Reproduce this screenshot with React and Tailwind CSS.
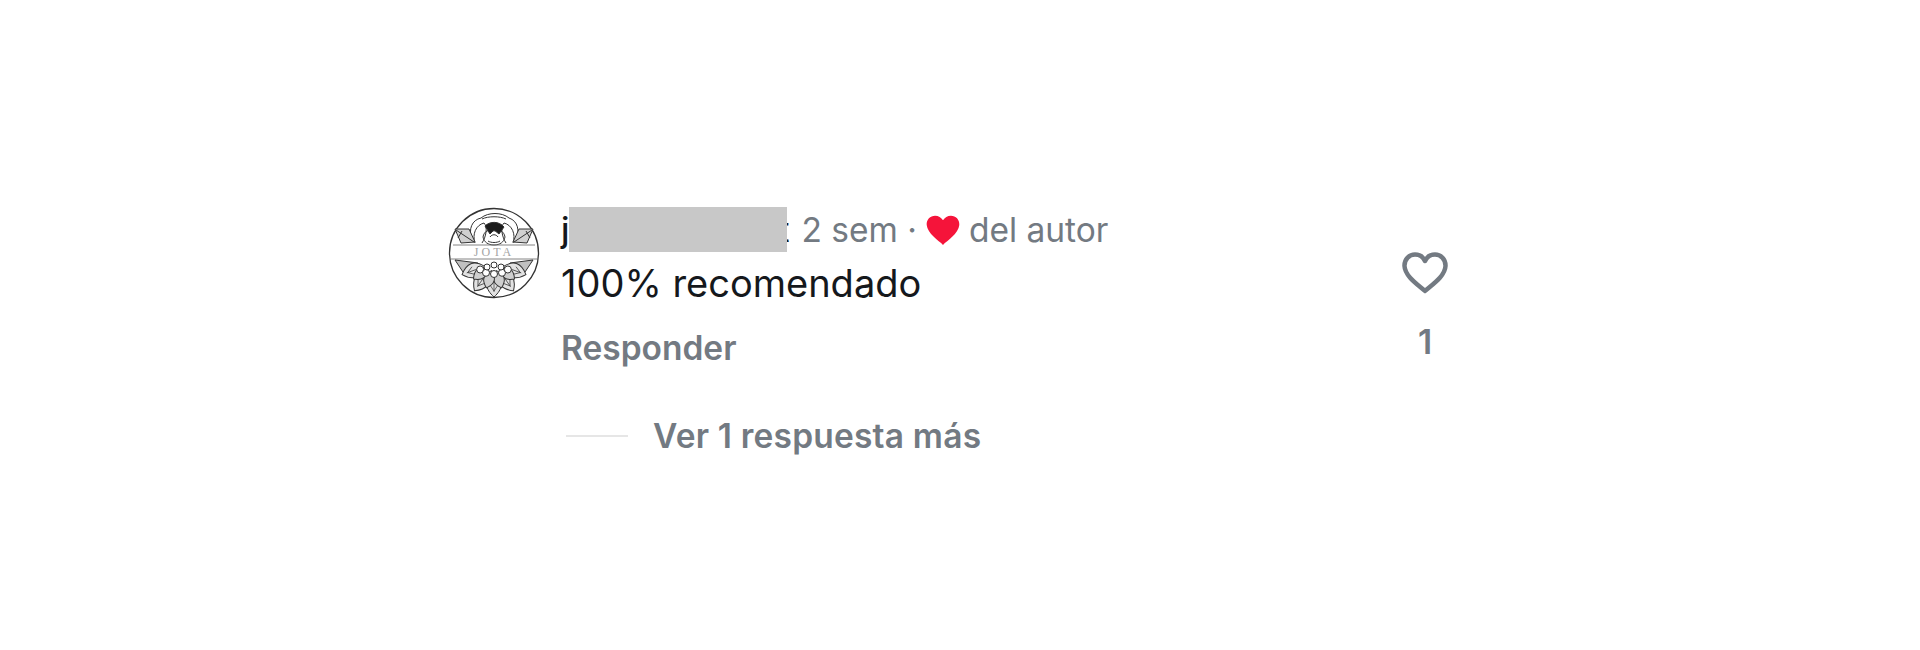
import React from 'react'

function Avatar() {
  const petals = [-70, -35, 0, 35, 70]
  const inner = [-52, -17, 17, 52]
  const beads = [-60, -30, 0, 30, 60]
  return (
    <svg width="92" height="92" viewBox="0 0 92 92" className="shrink-0" fill="none" stroke="#333">
      <circle cx="46" cy="46" r="44.5" strokeWidth="1.300" />
      {/* rose on top */}
      <g strokeWidth="1">
        <path d="M24 33C20 22 24 13 33 11C40 5 54 5 61 11C70 14 72 24 68 33" />
        <path d="M27 36C24 27 28 18 36 16C40 20 38 30 34 36" />
        <path d="M65 36C68 27 64 18 56 16C52 20 54 30 58 36" />
        <path d="M34 12C40 9 52 9 58 12" />
        <path d="M35 30C36 24 41 22 46 24C51 22 56 24 57 30C56 35 52 38 46 38C40 38 36 35 35 30Z" />
        <path d="M37 19C42 14 51 14 56 20L51 27L46 23L42 27Z" fill="#1c1c1c" />
        <path d="M42 30C44 27 48 27 50 30M40 34C43 36 49 36 52 34" />
        <path d="M7 22L21 22L27 35L13 36Z" fill="#d0d0d0" />
        <path d="M85 22L71 22L65 35L79 36Z" fill="#d0d0d0" />
        <path d="M8 23L26 35M84 23L66 35M14 24L10 31M78 24L82 31" />
      </g>
      {/* band with name */}
      <path d="M5 38H87M3 52H89" strokeWidth="0.900" stroke="#777" />
      <text x="46" y="49" textAnchor="middle" fontSize="12" letterSpacing="3" fontFamily="Liberation Serif, serif" stroke="none" fill="#a5a5a5">JOTA</text>
      {/* lotus below */}
      <g strokeWidth="1">
        <path d="M7 53L30 56L27 70L17 68Z" fill="#c0c0c0" />
        <path d="M85 53L62 56L65 70L75 68Z" fill="#c0c0c0" />
        {petals.map((a) => (
          <g key={a} transform={`rotate(${a} 46 56)`}>
            <path d="M46 90C37 82 36 74 46 66C56 74 55 82 46 90Z" fill="#e2e2e2" />
            <path d="M46 85V72M42 78L46 84L50 78" strokeWidth="0.700" />
          </g>
        ))}
        {inner.map((a) => (
          <path key={a} transform={`rotate(${a} 46 56)`} d="M46 82C39 76 39 70 46 64C53 70 53 76 46 82Z" fill="#cfcfcf" />
        ))}
        {beads.map((a) => (
          <circle key={a} cx={46 + 16 * Math.sin((a * Math.PI) / 180)} cy={58 + 9 * Math.cos((a * Math.PI) / 180)} r="3.500" fill="#fff" />
        ))}
        <circle cx="39" cy="60" r="3" fill="#fff" />
        <circle cx="53" cy="60" r="3" fill="#fff" />
        <circle cx="46" cy="58" r="3" fill="#fff" />
      </g>
    </svg>
  )
}

export default function App() {
  return (
    <div className="w-[1920px] h-[650px] bg-white pt-[207px] pl-[448px] font-['Inter',sans-serif] overflow-hidden">
      <div className="flex w-[1100px]">
        <Avatar />
        <div className="ml-[21px] w-[834px]">
          <div className="relative flex items-center h-[44px] mt-[1px] text-[33.500px] text-[#737a82]">
            <span className="text-[#15181c] font-medium">j</span>
            <div className="w-[209px]" />
            <span className="text-[#15181c]">t</span>
            <div className="absolute left-[8px] -top-[1px] w-[218px] h-[45px] bg-[#c8c8c8]" />
            <span className="ml-[12px]">2 sem ·</span>
            <svg width="34" height="30" viewBox="0 0 24 21" className="mx-[9px]">
              <path fill="#f5143a" d="M12 21C9 18 1 13 .5 7 .2 3 3 .4 6.4.4 8.8.4 10.8 1.600 12 3.700 13.200 1.600 15.200.4 17.600.4 21 .4 23.800 3 23.500 7 23 13 15 18 12 21Z" />
            </svg>
            <span>del autor</span>
          </div>
          <div className="text-[38px] leading-[46px] text-[#15181c] mt-[8px]">100% recomendado</div>
          <div className="text-[33.500px] leading-[40px] font-semibold text-[#737a82] mt-[22px]">Responder</div>
        </div>
        <div className="flex flex-col items-center w-[60px]">
          <svg width="46" height="42" viewBox="0 0 46 42" fill="none" className="mt-[45px]">
            <path stroke="#737a82" strokeWidth="4.500" strokeLinejoin="round" d="M23 39C18 34 3 25 2.500 14 2.300 7 7.500 2.500 13 2.500 17 2.500 21 4.500 23 9 25 4.500 29 2.500 33 2.500 38.500 2.500 43.700 7 43.500 14 43 25 28 34 23 39Z" />
          </svg>
          <span className="text-[33.500px] leading-[40px] font-semibold text-[#737a82] mt-[28px]">1</span>
        </div>
      </div>
      <div className="flex items-center ml-[118px] mt-[48px]">
        <div className="w-[62px] h-[2px] bg-[#e6e6e6]" />
        <span className="ml-[25px] text-[33.500px] leading-[40px] font-semibold tracking-[0.2px] text-[#737a82]">Ver 1 respuesta más</span>
      </div>
    </div>
  )
}
